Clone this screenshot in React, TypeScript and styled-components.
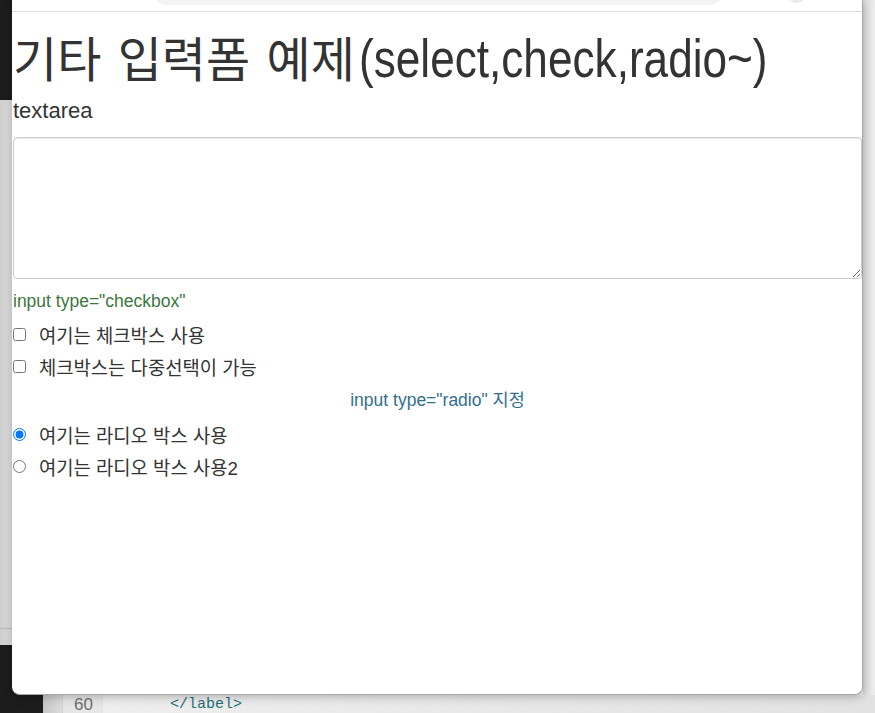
import React from "react";
import styled, { createGlobalStyle } from "styled-components";

const GlobalStyle = createGlobalStyle`
  html, body { margin: 0; padding: 0; }
  body {
    width: 875px;
    height: 713px;
    overflow: hidden;
    font-family: "Liberation Sans", "Noto Sans CJK KR", sans-serif;
    color: #333;
  }
`;

const Desktop = styled.div`
  display: grid;
  grid-template-columns: 12px 851px 12px;
  grid-template-rows: 695px 18px;
  width: 875px;
  height: 713px;
  background: #ececec;
`;

const LeftStrip = styled.div`
  grid-column: 1;
  grid-row: 1;
  display: flex;
  flex-direction: column;
`;

const Block = styled.div<{ $h?: number; $tone: "dark" | "gray" | "rule" }>`
  height: ${(p) => (p.$h ? `${p.$h}px` : "auto")};
  flex: ${(p) => (p.$h ? "none" : "1")};
  background: ${(p) =>
    p.$tone === "dark"
      ? "#1c1c1c"
      : p.$tone === "rule"
      ? "#bdbdbd"
      : "linear-gradient(to right, #cdcdcd, #e0e0e0)"};
`;

const RightStrip = styled.div`
  grid-column: 3;
  grid-row: 1;
  background: linear-gradient(to right, #d9d9d9, #eeeeee);
`;

const WindowSlot = styled.div`
  grid-column: 2;
  grid-row: 1;
  background: linear-gradient(
    to right,
    #1c1c1c 0 31px,
    #d5d5d5 31px 50px,
    #ececec 50px
  );
  position: relative;
  z-index: 2;
`;

const Window = styled.div`
  display: flex;
  flex-direction: column;
  height: 100%;
  box-sizing: border-box;
  background: #fff;
  border-right: 1px solid #a8a8a8;
  border-bottom: 1px solid #a8a8a8;
  border-radius: 0 0 8px 8px;
  box-shadow: 0 2px 10px rgba(0, 0, 0, 0.25);
  overflow: hidden;
`;

const TopBar = styled.div`
  height: 11px;
  flex: none;
  border-bottom: 1px solid #dadce0;
  display: flex;
  align-items: flex-end;
  overflow: hidden;
  padding-left: 141px;
  gap: 64px;
`;

const AddressPill = styled.div`
  width: 570px;
  height: 28px;
  margin-bottom: 6px;
  border-radius: 14px;
  background: #f1f3f4;
  flex: none;
`;

const ProfileDot = styled.div`
  width: 20px;
  height: 20px;
  margin-bottom: 8px;
  border-radius: 50%;
  background: #e8eaed;
  flex: none;
`;

const Content = styled.div`
  display: flex;
  flex-direction: column;
  padding-left: 1px;
  flex: 1;
`;

const Title = styled.h1`
  margin: 17px 0 0;
  font-weight: normal;
  line-height: 60px;
  height: 60px;
  white-space: nowrap;
  color: #333;
  font-size: 53px;
`;

const TitleKo = styled.span`
  font-family: "Liberation Sans", "Noto Sans CJK KR", sans-serif;
  font-size: 48px;
  line-height: 60px;
  word-spacing: 3px;
`;

const TitleEn = styled.span`
  display: inline-block;
  margin-left: 4px;
  font-family: "Liberation Sans", sans-serif;
  font-size: 53px;
  line-height: 60px;
  transform: scaleX(0.833);
  transform-origin: left center;
`;

const SubHeading = styled.div`
  margin-top: 9px;
  font-size: 22px;
  line-height: 26px;
  color: #333;
`;

const TextBox = styled.textarea`
  display: block;
  box-sizing: border-box;
  width: 849px;
  height: 142px;
  margin: 13px 0 0;
  padding: 6px 12px;
  border: 1px solid #ccc;
  border-radius: 4px;
  box-shadow: inset 0 1px 1px rgba(0, 0, 0, 0.075);
  font-family: "Liberation Sans", "Noto Sans CJK KR", sans-serif;
  font-size: 16px;
  outline: none;
`;

const Caption = styled.div<{ $color: string; $center?: boolean; $top: number }>`
  margin-top: ${(p) => p.$top}px;
  font-size: 17.5px;
  line-height: 22px;
  color: ${(p) => p.$color};
  text-align: ${(p) => (p.$center ? "center" : "left")};
`;

const OptionRow = styled.label<{ $top?: number }>`
  display: flex;
  align-items: center;
  gap: 13px;
  height: 32px;
  margin-top: ${(p) => p.$top ?? 0}px;
  font-size: 18.8px;
  color: #333;
`;

const Choice = styled.input`
  margin: 0;
  width: 13px;
  height: 13px;
  flex: none;
`;

const EditorStrip = styled.div`
  grid-column: 1 / -1;
  grid-row: 2;
  display: flex;
  font-family: "Liberation Mono", monospace;
  font-size: 15px;
  line-height: 20px;
`;

const EditorDark = styled.div`
  width: 43px;
  background: #1c1c1c;
`;

const EditorEdge = styled.div`
  width: 19px;
  background: linear-gradient(to right, #c6c6c6, #dcdcdc);
  border-right: 1px solid #cfcfcf;
`;

const Gutter = styled.div`
  width: 40px;
  box-sizing: border-box;
  padding-left: 11px;
  background: #e6e6e6;
  color: #6f6f6f;
  font-family: "Liberation Sans", sans-serif;
  font-size: 17px;
`;

const CodeLine = styled.div`
  flex: 1;
  padding-left: 67px;
  background: linear-gradient(to right, #eeeeee, #e2e2e2);
  color: #1d7178;
`;

export default function App() {
  return (
    <>
      <GlobalStyle />
      <Desktop>
        <LeftStrip>
          <Block $h={100} $tone="dark" />
          <Block $tone="gray" />
          <Block $h={1} $tone="rule" />
          <Block $h={16} $tone="gray" />
          <Block $h={50} $tone="dark" />
        </LeftStrip>
        <WindowSlot>
          <Window>
            <TopBar>
              <AddressPill />
              <ProfileDot />
            </TopBar>
            <Content>
              <Title>
                <TitleKo>기타 입력폼 예제</TitleKo>
                <TitleEn>(select,check,radio~)</TitleEn>
              </Title>
              <SubHeading>textarea</SubHeading>
              <TextBox />
              <Caption $color="#3c763d" $top={11}>
                input type="checkbox"
              </Caption>
              <OptionRow $top={6}>
                <Choice type="checkbox" />
                여기는 체크박스 사용
              </OptionRow>
              <OptionRow>
                <Choice type="checkbox" />
                체크박스는 다중선택이 가능
              </OptionRow>
              <Caption $color="#31708f" $center $top={7}>
                input type="radio" 지정
              </Caption>
              <OptionRow $top={7}>
                <Choice type="radio" name="r" defaultChecked />
                여기는 라디오 박스 사용
              </OptionRow>
              <OptionRow>
                <Choice type="radio" name="r" />
                여기는 라디오 박스 사용2
              </OptionRow>
            </Content>
          </Window>
        </WindowSlot>
        <RightStrip />
        <EditorStrip>
          <EditorDark />
          <EditorEdge />
          <Gutter>60</Gutter>
          <CodeLine>&lt;/label&gt;</CodeLine>
        </EditorStrip>
      </Desktop>
    </>
  );
}
